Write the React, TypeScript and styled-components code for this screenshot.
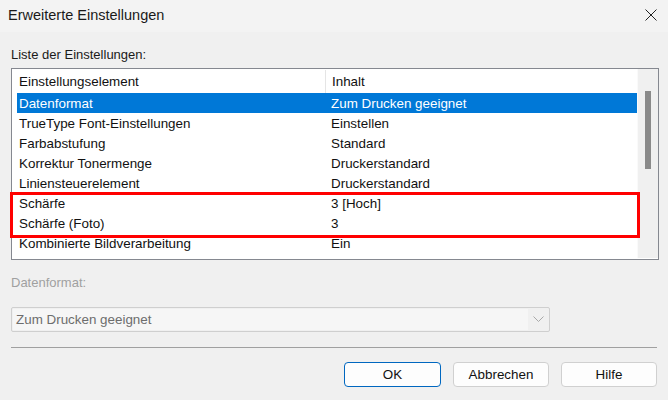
import React from "react";
import styled, { createGlobalStyle } from "styled-components";

const Global = createGlobalStyle`
  html, body { margin: 0; padding: 0; background: #f0f0f0; }
  body { font-family: "Liberation Sans", Arial, sans-serif; color: #000; }
  * { box-sizing: border-box; }
`;

const Window = styled.div`
  width: 668px;
  height: 400px;
  display: flex;
  flex-direction: column;
  background: #f0f0f0;
  overflow: hidden;
`;

const TitleBar = styled.div`
  height: 32px;
  flex: none;
  display: flex;
  align-items: center;
  justify-content: space-between;
  padding: 0 10px 2px 8px;
  background: #f3f3f3;
  font-size: 14.5px;
  color: #1a1a1a;
`;

const CloseButton = styled.div`
  width: 14px;
  height: 14px;
  display: flex;
  align-items: center;
  justify-content: center;
`;

const Content = styled.div`
  flex: 1;
  display: flex;
  flex-direction: column;
  padding: 15px 11px 0 11px;
`;

const Label = styled.div<{ $disabled?: boolean }>`
  font-size: 13px;
  line-height: 16px;
  height: 16px;
  color: ${(p) => (p.$disabled ? "#a0a0a0" : "#1a1a1a")};
`;

const ListBox = styled.div`
  position: relative;
  margin-top: 5px;
  width: 648px;
  height: 192px;
  border: 1px solid #858890;
  background: #fff;
  display: flex;
`;

const ListArea = styled.div`
  flex: 1;
  display: flex;
  flex-direction: column;
  font-size: 13.4px;
`;

const Header = styled.div`
  height: 24px;
  display: grid;
  grid-template-columns: 313px 1px 1fr;
  align-items: center;
  padding-top: 1px;
`;

const HeaderCell = styled.div<{ $pad: number }>`
  padding-left: ${(p) => p.$pad}px;
  white-space: nowrap;
  color: #111;
`;

const Divider = styled.div`
  height: 23px;
  align-self: start;
  background: #e5e5e5;
`;

const Row = styled.div<{ $selected?: boolean }>`
  margin-left: 5px;
  height: 20px;
  display: grid;
  grid-template-columns: 308px 1fr;
  align-items: center;
  padding-top: 1px;
  background: ${(p) => (p.$selected ? "#0078d7" : "transparent")};
  color: ${(p) => (p.$selected ? "#fff" : "#111")};
`;

const Cell = styled.div<{ $pad: number }>`
  padding-left: ${(p) => p.$pad}px;
  white-space: nowrap;
`;

const ScrollTrack = styled.div`
  width: 21px;
  height: 189px;
  background: #f0f0f0;
  border-left: 1px solid #fafafa;
  padding: 22px 0 0 7px;
`;

const ScrollThumb = styled.div`
  width: 6px;
  height: 78px;
  background: #8a8a8a;
`;

const Highlight = styled.div`
  position: absolute;
  left: -2px;
  top: 123px;
  width: 630px;
  height: 46px;
  border: 3px solid #ff0000;
  pointer-events: none;
`;

const BottomLabel = styled(Label)`
  margin-top: 15px;
`;

const Combo = styled.div`
  margin-top: 16px;
  width: 539px;
  height: 25px;
  border: 1px solid #cfcfcf;
  border-radius: 2px;
  display: flex;
  background: #f0f0f0;
`;

const ComboText = styled.div`
  flex: 1;
  background: #f6f6f6;
  margin: 1px 0 1px 1px;
  padding-left: 3px;
  display: flex;
  align-items: center;
  font-size: 13.4px;
  color: #6d6d6d;
`;

const ComboArrow = styled.div`
  width: 21px;
  display: flex;
  align-items: center;
  justify-content: center;
`;

const Separator = styled.div`
  margin-top: 15px;
  height: 1px;
  width: 646px;
  background: #a0a0a0;
`;

const ButtonRow = styled.div`
  margin-top: 14px;
  width: 646px;
  display: flex;
  justify-content: flex-end;
  gap: 12px;
`;

const Button = styled.div<{ $default?: boolean; $w: number }>`
  width: ${(p) => p.$w}px;
  height: 25px;
  border-radius: 4px;
  border: 1px solid ${(p) => (p.$default ? "#0067c0" : "#d0d0d0")};
  background: #fdfdfd;
  display: flex;
  align-items: center;
  justify-content: center;
  font-size: 13.4px;
  color: #111;
`;

const rows: [string, string][] = [
  ["Datenformat", "Zum Drucken geeignet"],
  ["TrueType Font-Einstellungen", "Einstellen"],
  ["Farbabstufung", "Standard"],
  ["Korrektur Tonermenge", "Druckerstandard"],
  ["Liniensteuerelement", "Druckerstandard"],
  ["Schärfe", "3 [Hoch]"],
  ["Schärfe (Foto)", "3"],
  ["Kombinierte Bildverarbeitung", "Ein"],
];

export default function App() {
  return (
    <>
      <Global />
      <Window>
        <TitleBar>
          <span>Erweiterte Einstellungen</span>
          <CloseButton>
            <svg width="12" height="12" viewBox="0 0 12 12">
              <path d="M0.5 0.5 L11.5 11.5 M11.5 0.5 L0.5 11.5" stroke="#222" strokeWidth="1" fill="none" />
            </svg>
          </CloseButton>
        </TitleBar>
        <Content>
          <Label>Liste der Einstellungen:</Label>
          <ListBox>
            <ListArea>
              <Header>
                <HeaderCell $pad={7}>Einstellungselement</HeaderCell>
                <Divider />
                <HeaderCell $pad={6}>Inhalt</HeaderCell>
              </Header>
              {rows.map(([a, b], i) => (
                <Row key={a} $selected={i === 0}>
                  <Cell $pad={2}>{a}</Cell>
                  <Cell $pad={6}>{b}</Cell>
                </Row>
              ))}
            </ListArea>
            <ScrollTrack>
              <ScrollThumb />
            </ScrollTrack>
            <Highlight />
          </ListBox>
          <BottomLabel $disabled>Datenformat:</BottomLabel>
          <Combo>
            <ComboText>Zum Drucken geeignet</ComboText>
            <ComboArrow>
              <svg width="11" height="7" viewBox="0 0 11 7">
                <path d="M0.5 0.5 L5.5 5.5 L10.5 0.5" stroke="#a8a8a8" strokeWidth="1" fill="none" />
              </svg>
            </ComboArrow>
          </Combo>
          <Separator />
          <ButtonRow>
            <Button $default $w={97}>OK</Button>
            <Button $w={96}>Abbrechen</Button>
            <Button $w={96}>Hilfe</Button>
          </ButtonRow>
        </Content>
      </Window>
    </>
  );
}
